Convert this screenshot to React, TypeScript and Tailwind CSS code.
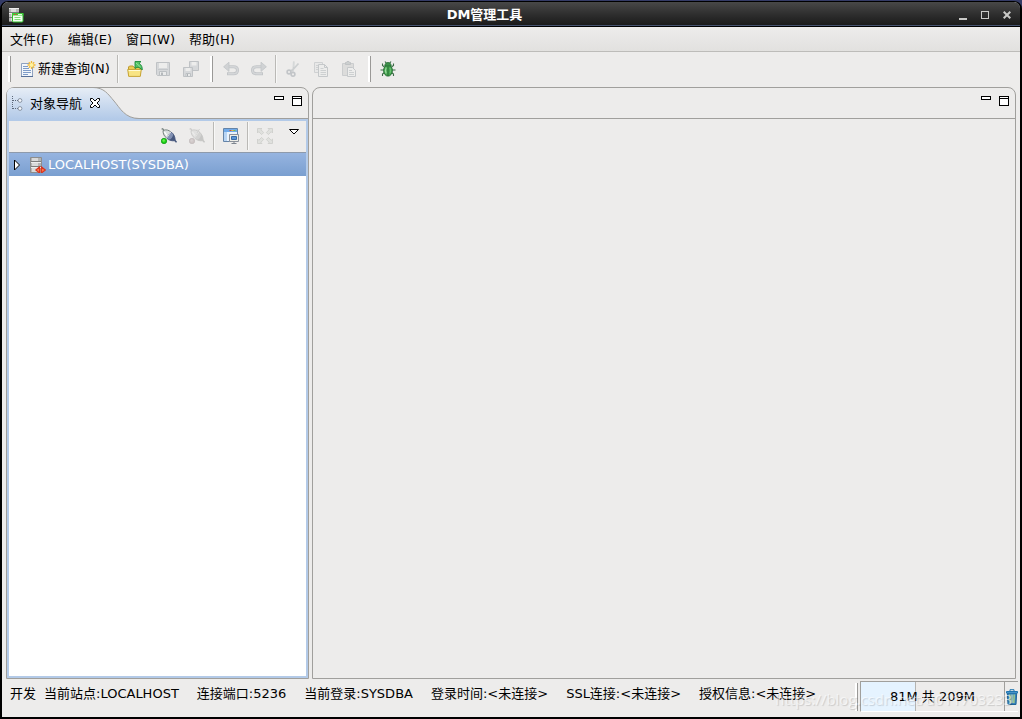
import React from 'react';

type IconProps = { children: React.ReactNode; className?: string };

function Icon({ children, className = '' }: IconProps) {
  return (
    <svg viewBox="0 0 16 16" width="16" height="16" className={'shrink-0 ' + className} fill="none" aria-hidden="true">
      {children}
    </svg>
  );
}

function AppIcon() {
  return (
    <Icon>
      <path d="M1 1h10v14H1z" fill="#b9b9b9" />
      <path d="M3 1h5v14H3z" fill="#dcdcdc" />
      <path d="M1 1.500h10M1 6.500h10" stroke="#efefef" />
      <path d="M1 5.500h10M1 10.500h10M1 14.500h10" stroke="#7c7c7c" />
      <rect x="4.500" y="6.500" width="10.500" height="8.500" rx="1" fill="#f2fff0" stroke="#2fbf2c" />
      <path d="M4 6h11.500v2.500H4z" fill="#3ccb38" />
      <path d="M6 7.500h1M8 7.500h1" stroke="#e33" />
      <path d="M10 7.500h4" stroke="#d9ffd4" />
      <path d="M6.500 10.500h6M6.500 12.500h6" stroke="#7fdc78" />
    </Icon>
  );
}

function NewQueryIcon() {
  return (
    <Icon>
      <path d="M1.500 2.500h11v13h-11z" fill="#f2f6fb" stroke="#8fa2c0" />
      <path d="M1 15.500h12" stroke="#566f98" />
      <path d="M3 5.500h5M3 7.500h6M3 9.500h8M3 11.500h8M3 13.500h5" stroke="#7f9cc8" />
      <path d="M11.500 0v8M7.500 4h8M8.800 1.300l5.400 5.400M14.200 1.300 8.800 6.700" stroke="#f2b836" strokeWidth="1.300" />
      <circle cx="11.500" cy="4" r="2" fill="#fff3a0" />
    </Icon>
  );
}

function OpenIcon() {
  return (
    <Icon>
      <path d="M1.500 14.500V6l1-1H6l1 1.500h6.500v8z" fill="#eccb52" stroke="#bd9a33" />
      <path d="M.700 8.500h13.600l-1 6.900H1.700z" fill="#f8e483" stroke="#c7a539" />
      <path d="M1.700 9.500h11.600" stroke="#fffbd6" />
      <path d="M7.500 1h6l-1.800 1.800c2.300 1.700 3.300 4 3 6.700-1.300-1.600-2.900-2.500-5-2.700L7.500 8z" transform="translate(.5 -.5)" fill="#52c464" stroke="#1d8a3d" strokeWidth=".9" />
      <path d="m9 2 4.500 4" stroke="#a6e6ad" strokeWidth=".8" />
    </Icon>
  );
}

function SaveIcon() {
  return (
    <Icon>
      <path d="M1.500 1.500h13v13h-12l-1-1z" fill="#d6d8da" stroke="#bfc2c5" />
      <path d="M4 2h8v5H4z" fill="#ededec" />
      <path d="M3 8.500h10" stroke="#c4c7ca" />
      <path d="M4.500 10.500h7v4h-7z" fill="#e9eaea" stroke="#bcc0c3" />
      <path d="M6 11.500h2V14H6z" fill="#b5b9bc" />
    </Icon>
  );
}

function SaveAllIcon() {
  return (
    <Icon>
      <path d="M6.500.500h9v9h-9z" fill="#d6d8da" stroke="#bfc2c5" />
      <path d="M8.500 1h5v3.500h-5z" fill="#ededec" />
      <path d="M.500 6.500h9v9h-9z" fill="#d6d8da" stroke="#bfc2c5" />
      <path d="M2.500 7h5v3h-5z" fill="#ededec" />
      <path d="M3 12.500h4.500v3H3z" fill="#e9eaea" stroke="#bcc0c3" />
      <path d="M4 13h1v2H4z" fill="#aeb2b5" />
    </Icon>
  );
}

function UndoIcon({ flip = false }: { flip?: boolean }) {
  return (
    <Icon className={flip ? '-scale-x-100' : ''}>
      <path d="M4 5.800h6.500c2.600 0 4 1.200 4 3.500s-1.400 3.500-4 3.500H4" stroke="#c2c5c8" strokeWidth="3" />
      <path d="M4 5.800h6.500c2.600 0 4 1.200 4 3.500s-1.400 3.500-4 3.500H5" stroke="#d4d6d8" strokeWidth="1.400" />
      <path d="M6 1.200v9.200L.600 5.800z" fill="#d0d2d4" stroke="#c2c5c8" strokeWidth=".8" />
    </Icon>
  );
}

function CutIcon() {
  return (
    <Icon>
      <path d="M8.800.500 8.500 7l-1 3.500M13.500 2.500 8 8.500 5.500 10" stroke="#cccfd0" strokeWidth="1.700" />
      <path d="M9 1 8.800 6" stroke="#e4e5e5" strokeWidth=".7" />
      <circle cx="4" cy="11" r="1.900" stroke="#c2c5c8" strokeWidth="1.600" />
      <circle cx="8" cy="13.300" r="1.900" stroke="#c2c5c8" strokeWidth="1.600" />
    </Icon>
  );
}

function CopyIcon() {
  return (
    <Icon>
      <path d="M1.500 1.500h8v10h-8z" fill="#e8e8e8" stroke="#cfd1d2" />
      <path d="M3 4.500h3M3 6.500h3M3 8.500h3" stroke="#cfd1d2" />
      <path d="M5.500 3.500h6l3 3v9h-9z" fill="#ececeb" stroke="#c5c8ca" />
      <path d="M11.500 3.500v3h3" stroke="#c5c8ca" />
      <path d="M7.500 7.500h3M7.500 9.500h5.500M7.500 11.500h5.500M7.500 13.500h5.500" stroke="#cdd0d1" />
    </Icon>
  );
}

function PasteIcon() {
  return (
    <Icon>
      <path d="M1.500 2.500h11v12h-11z" fill="#dcdcdb" stroke="#cbcdce" />
      <path d="M4.500 3.500v-2h1l.5-1h2l.5 1h1v2z" fill="#cccfcf" stroke="#c0c3c5" />
      <path d="M6.500 6.500h5l3 3v6h-8z" fill="#ededec" stroke="#c5c8ca" />
      <path d="M8 9.500h3M8 11.500h5M8 13.500h5" stroke="#cdd0d1" />
    </Icon>
  );
}

function BugIcon() {
  return (
    <Icon>
      <path d="M4.500 6 2.500 4.500v-2M11.500 6l2-1.500v-2M4 9H.500M12 9h3.500M4.500 11.500l-2 1.500v2M11.500 11.500l2 1.500v2M6.500 2.500 5 .500M9.500 2.500 11 .500" stroke="#3c6b47" strokeWidth="1.100" />
      <ellipse cx="8" cy="9.500" rx="4.400" ry="5.600" fill="#48a552" stroke="#226b30" strokeWidth=".9" />
      <path d="M4.800 5c0-2.200 1.400-3.500 3.200-3.500S11.200 2.800 11.200 5z" fill="#3d9149" stroke="#226b30" strokeWidth=".8" />
      <path d="M8 5.500V15" stroke="#226b30" strokeWidth=".9" />
      <path d="M6.200 6.500c-1 2-1 4 0 6" stroke="#9bdc9e" strokeWidth="1.200" />
      <path d="M10 7c.8 2 .6 4 0 5" stroke="#70c678" />
    </Icon>
  );
}

function PlugIcon({ off = false }: { off?: boolean }) {
  const dark = off ? '#c6c6c5' : '#47587d';
  const mid = off ? '#d3d3d2' : '#8291b3';
  const light = off ? '#e0e0df' : '#d9dedf';
  const line = off ? '#c8c8c7' : '#6a7773';
  return (
    <Icon>
      <path d="M.500 1h2M1.500.500 3 2.500" stroke={line} />
      <path d="M2 2.500C5 1.200 7.800 2 9.800 4L5.700 10C3.200 8.500 2 5.800 2 2.500z" fill={light} stroke={line} strokeWidth=".9" />
      <path d="M3.300 3.800 6 7.500" stroke={off ? '#ececeb' : '#ffffff'} strokeWidth="1.200" />
      <path d="M9.800 4c2.700 1.300 4.300 4.300 4.500 8.700-3.800.5-7-.5-8.600-2.700z" fill={mid} stroke={dark} strokeWidth=".8" />
      <path d="M12.300 6.200c1.200 1.700 1.800 3.800 2 6.500-2.600.3-4.800 0-6.500-.900 2.300-.6 4-2.600 4.500-5.600z" fill={dark} />
      <path d="m9.800 4-4.100 6" stroke={off ? '#e6e6e5' : '#eef1f5'} strokeWidth=".9" />
      <path d="m14 12.500 1.500 1.800" stroke={dark} strokeWidth="1.500" />
      <circle cx="3" cy="13" r="2.700" fill={off ? '#cfc7c7' : '#1ed016'} stroke={off ? '#c2bcbc' : '#0a9410'} strokeWidth=".7" />
      <circle cx="2.700" cy="12.500" r="1.200" fill={off ? '#d8d2d2' : '#67f04e'} />
      {off && <path d="m8 1.500 3 3M10.500 1 8 5" stroke="#d0d0cf" />}
    </Icon>
  );
}

function MonitorWindowIcon() {
  return (
    <Icon>
      <path d="M.500.500h14v13H.500z" fill="#eaf3fd" stroke="#6584a8" />
      <path d="M1 1h13v3H1z" fill="#71abea" />
      <path d="M6.500 2.500h2" stroke="#dc4c32" />
      <path d="M8.500 2.500h2" stroke="#f1b93b" />
      <path d="M10.500 2.500h2" stroke="#73c34a" />
      <path d="M1 4h3v9H1z" fill="#b9d5f4" />
      <path d="M6.500 6.500h9v7h-9z" fill="#ededE6" stroke="#8a919b" />
      <path d="M8.500 8.500h5v3h-5z" fill="#5b96d6" stroke="#3a6ca9" />
      <path d="M8.500 15.500h5M11 13.500v2" stroke="#7d858f" />
    </Icon>
  );
}

function ExpandIcon() {
  const arrow = 'M.500.500h4.500L3.800 1.700l2.900 2.800L4.600 6.600 1.800 3.700.500 5z';
  return (
    <Icon>
      <g fill="#e0e1de" stroke="#cccdc9" strokeWidth=".8">
        <path d={arrow} />
        <path d={arrow} transform="matrix(-1 0 0 1 16 0)" />
        <path d={arrow} transform="matrix(1 0 0 -1 0 16)" />
        <path d={arrow} transform="matrix(-1 0 0 -1 16 16)" />
      </g>
    </Icon>
  );
}

function TreeIcon() {
  return (
    <Icon>
      <path d="M1.500 0v13M2 4.500h5M2 12.500h5" stroke="#5d6878" strokeDasharray="1 1" />
      <circle cx="9" cy="4.500" r="1.900" fill="#f5f8fc" stroke="#8793a3" />
      <circle cx="9" cy="12.500" r="1.900" fill="#f5f8fc" stroke="#8793a3" />
    </Icon>
  );
}

function ServerIcon() {
  return (
    <Icon>
      <path d="M.500.500h11v15H.500z" fill="#b4b4b4" stroke="#8d8d8d" />
      <path d="M2 1h6v14H2z" fill="#d9d9d9" />
      <path d="M1 4.500h10M1 9.500h10" stroke="#7d7d7d" />
      <path d="M1 5.500h10M1 10.500h10" stroke="#ededed" />
      <path d="M9.500 10 5.800 13l3.700 3zM11.500 10l3.800 3-3.800 3z" fill="#fb7a50" stroke="#d9351e" strokeWidth="1.100" />
      <path d="M9.500 12h2M9.500 14h2" stroke="#e24528" />
    </Icon>
  );
}

function TrashIcon() {
  return (
    <svg viewBox="0 0 12 16" width="12" height="16" fill="none" aria-hidden="true" className="shrink-0">
      <path d="M1.300 4h9.400l-.7 11.500H2z" fill="#3a82ba" stroke="#1f6698" />
      <path d="M3.800 5.500 4.200 14M8.200 5.500 7.800 14" stroke="#a9d38a" strokeWidth="1.400" />
      <path d="M6 5.500V14" stroke="#e3f1c0" />
      <path d="M.500 2.500h11V4H.500z" fill="#6fb0de" stroke="#1f75b0" />
      <path d="M4 2V.700h4V2" stroke="#1f75b0" />
    </svg>
  );
}

function Grip({ className = '' }: { className?: string }) {
  return <span className={'w-[3px] shrink-0 border-l-2 border-r border-l-white border-r-[#9a9997] ' + className} />;
}

function Divider() {
  return (
    <span className="flex h-7 px-0.5">
      <span className="w-0.5 border-l border-r border-l-[#bab9b6] border-r-[#f8f8f7]" />
    </span>
  );
}

function ToolButton({ label, disabled, children }: { label: string; disabled?: boolean; children: React.ReactNode }) {
  return (
    <button type="button" aria-label={label} disabled={disabled} className="flex h-7 w-7 shrink-0 items-center justify-center">
      {children}
    </button>
  );
}

function ViewControls() {
  return (
    <div className="flex items-start gap-2 pt-2 pr-1.5">
      <button type="button" aria-label="最小化" className="h-1 w-2.5 border border-black bg-white" />
      <button type="button" aria-label="最大化" className="flex h-2.5 w-2.5 items-start border border-black bg-white pt-px">
        <span className="h-px w-full bg-black" />
      </button>
    </div>
  );
}

const menus = ['文件(F)', '编辑(E)', '窗口(W)', '帮助(H)'];
const statuses = ['当前站点:LOCALHOST', '连接端口:5236', '当前登录:SYSDBA', '登录时间:<未连接>', 'SSL连接:<未连接>', '授权信息:<未连接>'];

export default function App() {
  const used = 81;
  const total = 209;
  return (
    <div className="flex h-screen w-full flex-col overflow-hidden bg-[#343b66] pt-px font-['DejaVu_Sans','Noto_Sans_CJK_SC',sans-serif] text-[13px] leading-4 text-black">
      <div className="relative flex min-h-0 flex-1 flex-col rounded-t-lg border-t border-r-2 border-b-2 border-l-2 border-black bg-[#edeceb]">
        <header className="flex h-[25px] shrink-0 items-center rounded-t-md border-b border-black bg-linear-to-b from-[#484848] via-[#2f2f2f] to-[#191919] pt-0.5 pr-0.5 shadow-[inset_0_-1px_0_#46536f]">
          <span className="flex w-[22px] justify-end"><AppIcon /></span>
          <h1 className="flex-1 text-center font-bold text-white">DM管理工具</h1>
          <div className="flex w-[73px] items-center justify-end gap-[11px] pr-1.5">
            <button type="button" aria-label="最小化窗口" className="flex h-3 w-[11px] items-end justify-center pb-px">
              <span className="h-0.5 w-2 bg-[#c9c9c7]" />
            </button>
            <button type="button" aria-label="最大化窗口" className="flex h-3 w-[11px] items-center justify-center">
              <span className="h-2 w-2 border border-[#c9c9c7]" />
            </button>
            <button type="button" aria-label="关闭窗口" className="flex h-3 w-[11px] items-center justify-center">
              <svg viewBox="0 0 8 8" width="8" height="8" aria-hidden="true">
                <path d="m.700.700 6.600 6.600M7.300.700.700 7.300" stroke="#c9c9c7" strokeWidth="2" />
              </svg>
            </button>
          </div>
        </header>

        <nav className="flex h-[25px] shrink-0 items-center gap-3.5 border-b border-[#bdbcb9] bg-linear-to-b from-[#edeceb] to-[#e2e1df] px-2 pt-0.5">
          {menus.map((m) => (
            <button key={m} type="button" className="whitespace-nowrap">{m}</button>
          ))}
        </nav>

        <div role="toolbar" aria-label="工具栏" className="flex h-[35px] shrink-0 items-center pb-px pl-px">
          <Grip className="mr-1 ml-[5px] h-[26px]" />
          <button type="button" className="flex h-7 w-[100px] items-center gap-0.5 pl-[5px] whitespace-nowrap">
            <NewQueryIcon />
            新建查询(N)
          </button>
          <Divider />
          <ToolButton label="打开"><OpenIcon /></ToolButton>
          <ToolButton label="保存" disabled><SaveIcon /></ToolButton>
          <ToolButton label="全部保存" disabled><SaveAllIcon /></ToolButton>
          <Grip className="mr-1 ml-[5px] h-[26px]" />
          <ToolButton label="撤销" disabled><UndoIcon /></ToolButton>
          <ToolButton label="重做" disabled><UndoIcon flip /></ToolButton>
          <Divider />
          <ToolButton label="剪切" disabled><CutIcon /></ToolButton>
          <ToolButton label="复制" disabled><CopyIcon /></ToolButton>
          <ToolButton label="粘贴" disabled><PasteIcon /></ToolButton>
          <Grip className="mr-[3px] ml-[5px] h-[26px]" />
          <ToolButton label="调试"><BugIcon /></ToolButton>
        </div>

        <main className="flex min-h-0 flex-1 gap-[3px] pr-1 pl-1">
          <section className="flex w-[303px] shrink-0 flex-col rounded-t-lg border border-[#a09f9c]">
            <div className="relative flex h-[31px] shrink-0 justify-between border-b border-[#a09f9c]">
              <svg viewBox="0 0 132 31" width="132" height="31" className="absolute top-0 left-0" fill="none" aria-hidden="true">
                <defs>
                  <linearGradient id="tab" x1="0" y1="0" x2="0" y2="1">
                    <stop offset="0" stopColor="#e6edf6" />
                    <stop offset="1" stopColor="#b3cae8" />
                  </linearGradient>
                </defs>
                <path d="M0 5Q1 0 6 0h80C97 0 101 6 107 13s11 17.500 25 17.500V31H0z" fill="url(#tab)" />
                <path d="M86-.500C97-.500 101 6 107 13s11 17.500 25 17.500" stroke="#a09f9c" />
              </svg>
              <div className="relative flex items-center pt-0.5 pl-1">
                <button type="button" className="flex items-center gap-[3px]">
                  <TreeIcon />
                  对象导航
                </button>
                <button type="button" aria-label="关闭" className="ml-2 pb-0.5">
                  <svg viewBox="0 0 10 10" width="10" height="10" fill="#fff" stroke="#000" aria-hidden="true">
                    <path d="M.500.500h2L5 3 7.500.500h2v2L7 5l2.500 2.500v2h-2L5 7 2.500 9.500h-2v-2L3 5 .500 2.500z" />
                  </svg>
                </button>
              </div>
              <ViewControls />
            </div>
            <div className="flex min-h-0 flex-1 flex-col border-2 border-[#b3cae8]">
              <div role="toolbar" aria-label="导航工具栏" className="flex h-[31px] shrink-0 items-center justify-end bg-[#edeceb] pb-0.5">
                <ToolButton label="连接"><PlugIcon /></ToolButton>
                <ToolButton label="断开连接" disabled><PlugIcon off /></ToolButton>
                <Divider />
                <ToolButton label="监视"><MonitorWindowIcon /></ToolButton>
                <Divider />
                <ToolButton label="展开" disabled><ExpandIcon /></ToolButton>
                <button type="button" aria-label="视图菜单" className="flex h-5 w-[27px] items-start justify-center self-start pt-2 pl-[3px]">
                  <svg viewBox="0 0 10 6" width="10" height="6" fill="#fff" stroke="#000" aria-hidden="true">
                    <path d="M.500.500h9L5 5z" />
                  </svg>
                </button>
              </div>
              <div role="tree" aria-label="对象导航" className="min-h-0 flex-1 bg-white">
                <div role="treeitem" aria-selected="true" className="flex h-6 items-center border-t border-[#8e9aab] bg-linear-to-b from-[#96b4e0] to-[#7a9fd0] pl-1 text-white">
                  <svg viewBox="0 0 8 12" width="8" height="12" fill="#fff" stroke="#000" aria-hidden="true">
                    <path d="M1.500 1v10l5-5z" />
                  </svg>
                  <span className="ml-[9px]"><ServerIcon /></span>
                  <span className="ml-0.5">LOCALHOST(SYSDBA)</span>
                </div>
              </div>
            </div>
          </section>

          <section className="flex min-w-0 flex-1 flex-col rounded-t-lg border border-[#a09f9c]">
            <div className="flex h-[31px] shrink-0 justify-end border-b border-[#a09f9c]">
              <ViewControls />
            </div>
          </section>
        </main>

        <footer className="flex h-[38px] shrink-0 items-start pt-0.5 pr-0.5 pl-2">
          <span className="mt-[5px]">开发</span>
          <div className="mt-[5px] ml-2 flex flex-1 gap-[18px] whitespace-nowrap">
            {statuses.map((s) => (
              <span key={s}>{s}</span>
            ))}
          </div>
          <Grip className="mt-0.5 h-7" />
          <div className="ml-0.5 flex h-[31px] w-[158px] border-t border-b border-l border-t-[#a09f9c] border-b-white border-l-[#a09f9c]">
            <div className="relative flex flex-1 items-center justify-center">
              <span className="absolute inset-y-0 left-0 border-r border-[#b5b4b1] bg-[#e5f3ff]" style={{ width: `${(used / total) * 100}%` }} />
              <span className="relative">{used}M 共 {total}M</span>
            </div>
            <button type="button" aria-label="运行垃圾回收" className="flex w-3.5 items-center justify-center border-l border-[#a09f9c]">
              <TrashIcon />
            </button>
          </div>
        </footer>

        <span className="pointer-events-none absolute right-2 bottom-2 font-['Open_Sans',sans-serif] text-[15px] leading-5 text-white/60 [text-shadow:1px_1px_1px_rgba(0,0,0,0.15)]">
          https://blog.csdn.net/u011703233
        </span>
      </div>
    </div>
  );
}
